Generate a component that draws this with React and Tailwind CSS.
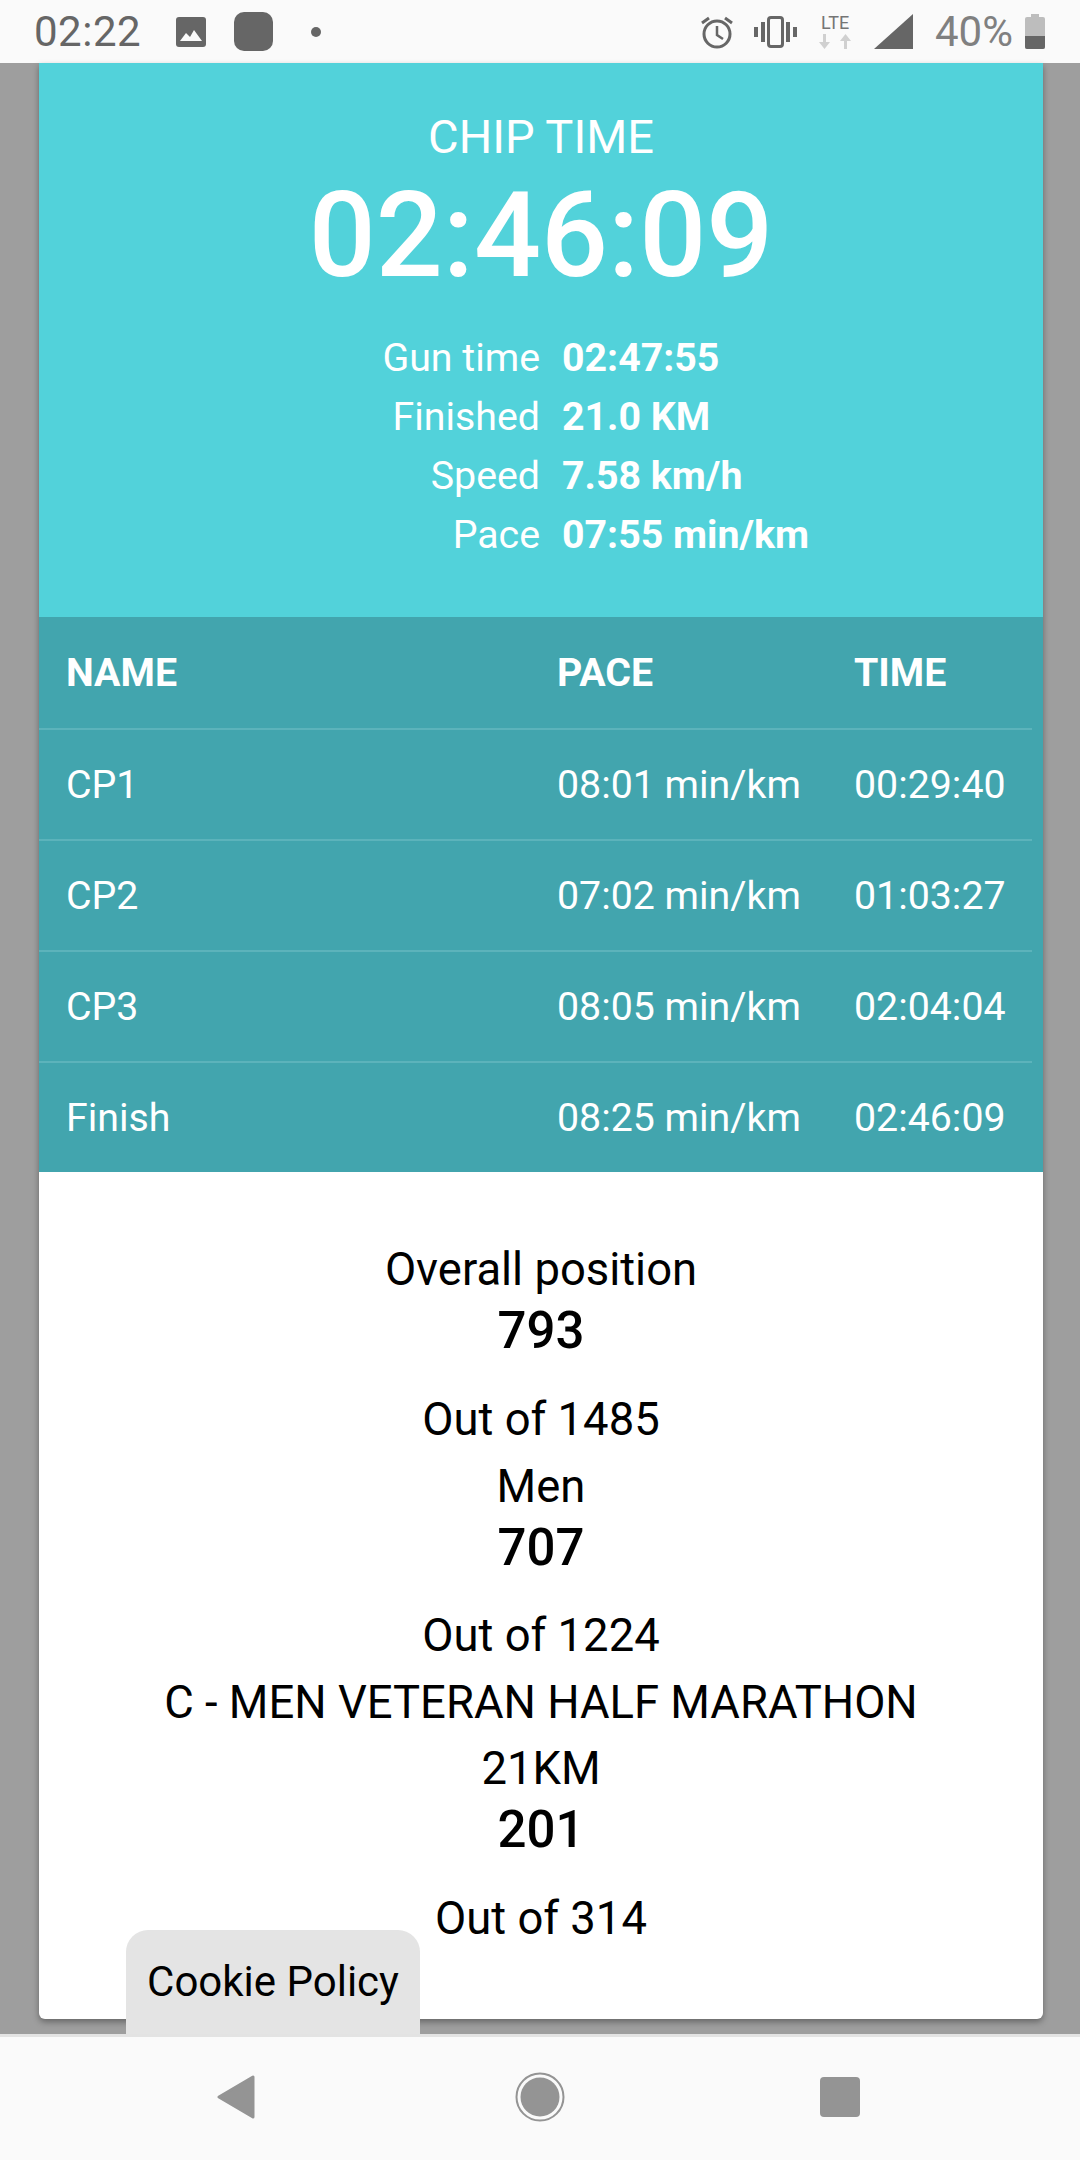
const stats = [
  ['Gun time', '02:47:55'],
  ['Finished', '21.0 KM'],
  ['Speed', '7.58 km/h'],
  ['Pace', '07:55 min/km'],
];

const splits = [
  ['CP1', '08:01 min/km', '00:29:40'],
  ['CP2', '07:02 min/km', '01:03:27'],
  ['CP3', '08:05 min/km', '02:04:04'],
  ['Finish', '08:25 min/km', '02:46:09'],
];

const positions = [
  ['Overall position', '793', 'Out of 1485'],
  ['Men', '707', 'Out of 1224'],
  ['C - MEN VETERAN HALF MARATHON 21KM', '201', 'Out of 314'],
];

function StatusBar() {
  return (
    <div className="h-[63px] shrink-0 bg-[#fafafa] flex items-center text-[#666666]">
      <span className="ml-[34px] w-[142px] text-[42px] leading-none tracking-[0.5px]">02:22</span>
      {/* gallery notification */}
      <svg className="w-[30px] h-[30px]" viewBox="0 0 30 30">
        <rect width="30" height="30" rx="3" fill="#666666" />
        <path d="M4 24l6-8 4 4 4-7 8 11z" fill="#fafafa" />
      </svg>
      <div className="ml-[28px] w-[39px] h-[39px] rounded-[10px] bg-[#666666]" />
      <div className="ml-[38px] w-[10px] h-[10px] rounded-full bg-[#666666]" />
      <div className="flex-1" />
      {/* alarm */}
      <svg className="w-[34px] h-[34px]" viewBox="0 0 34 34" fill="none" stroke="#666666">
        <circle cx="17" cy="19" r="13" strokeWidth="3" />
        <path d="M17 11v9l6 4" strokeWidth="2.5" />
        <path d="M2 8l7-5M32 8l-7-5" strokeWidth="3" />
      </svg>
      {/* vibrate */}
      <svg className="ml-[20px] w-[43px] h-[32px]" viewBox="0 0 43 32" fill="#666666">
        <path d="M0 11h4v10H0zM7 6h4v20H7zM32 6h4v20h-4zM39 11h4v10h-4z" />
        <rect x="14.5" y="1.5" width="14" height="29" rx="2.5" fill="none" stroke="#666666" strokeWidth="3" />
      </svg>
      {/* mobile data */}
      <div className="ml-[21px] w-[34px] flex flex-col items-center">
        <span className="text-[18px] leading-[16px] text-[#757575]">LTE</span>
        <svg className="mt-[3px] w-[34px] h-[15px]" viewBox="0 0 34 15" fill="#d0d0d0">
          <path d="M5 0h3v8h4l-5.5 7L1 8h4zM26 15h3V7h4l-5.5-7L22 7h4z" />
        </svg>
      </div>
      <svg className="ml-[22px] w-[39px] h-[35px]" viewBox="0 0 39 35">
        <path d="M39 0v35H0z" fill="#666666" />
      </svg>
      <span className="ml-[22px] w-[78px] text-[42px] leading-none text-[#808080]">40%</span>
      {/* battery */}
      <svg className="ml-[12px] mr-[35px] w-[20px] h-[35px]" viewBox="0 0 20 35">
        <path d="M6 0h8v3h4a2 2 0 0 1 2 2v28a2 2 0 0 1-2 2H2a2 2 0 0 1-2-2V5a2 2 0 0 1 2-2h4z" fill="#bdbdbd" />
        <path d="M0 22h20v11a2 2 0 0 1-2 2H2a2 2 0 0 1-2-2z" fill="#666666" />
      </svg>
    </div>
  );
}

function NavBar() {
  return (
    <div className="h-[126px] shrink-0 bg-[#fafafa] border-t-[3px] border-[#e3e3e3] relative flex items-center">
      <svg className="ml-[217px] -mt-[3px] w-[38px] h-[44px]" viewBox="0 0 38 44">
        <path d="M36 2v40L2 22z" fill="#949494" stroke="#949494" strokeWidth="3" strokeLinejoin="round" />
      </svg>
      <svg className="ml-[260px] -mt-[3px] w-[50px] h-[50px]" viewBox="0 0 50 50">
        <circle cx="25" cy="25" r="23.5" fill="none" stroke="#949494" strokeWidth="2" />
        <circle cx="25" cy="25" r="19.5" fill="#949494" />
      </svg>
      <div className="ml-[255px] -mt-[3px] w-[40px] h-[40px] rounded-[4px] bg-[#949494]" />
    </div>
  );
}

export default function App() {
  return (
    <div className="relative w-[1080px] h-[2160px] overflow-hidden flex flex-col bg-[#9e9e9e] font-['Roboto',sans-serif] text-black">
      <StatusBar />
      <main className="flex-1 px-[39px]">
        <div className="w-[1004px] h-[1956px] bg-white rounded-b-[6px] overflow-hidden shadow-[0_3px_6px_rgba(0,0,0,0.35)]">
          {/* chip time panel */}
          <section className="h-[554px] bg-[#52d2da] text-white text-center pt-[46px]">
            <p className="text-[47px] leading-[56px]">CHIP TIME</p>
            <p className="text-[118px] leading-[130px] font-medium mt-[6px]">02:46:09</p>
            <div className="mt-[28px] grid grid-cols-[501px_1fr] gap-x-[22px] text-[39.3px] leading-[59px] text-left">
              {stats.map(([label, value]) => (
                <div key={label} className="contents">
                  <span className="text-right">{label}</span>
                  <span className="font-bold">{value}</span>
                </div>
              ))}
            </div>
          </section>

          {/* checkpoint splits */}
          <section className="bg-[#42a5ae] text-white text-[39.3px]">
            <div className="w-[993px] h-[113px] pl-[27px] pt-[2px] grid grid-cols-[491px_297px_1fr] items-center font-bold border-b-2 border-[#5cb3bb]">
              <span>NAME</span>
              <span>PACE</span>
              <span>TIME</span>
            </div>
            {splits.map(([name, pace, time], i) => (
              <div
                key={name}
                className={`w-[993px] pl-[27px] pt-[2px] grid grid-cols-[491px_297px_1fr] items-center ${i < splits.length - 1 ? 'h-[111px] border-b-2 border-[#5cb3bb]' : 'h-[109px]'}`}
              >
                <span>{name}</span>
                <span>{pace}</span>
                <span>{time}</span>
              </div>
            ))}
          </section>

          {/* rankings */}
          <section className="pt-[65px] px-[100px] text-center text-[45.4px] leading-[66px]">
            {positions.map(([label, rank, total]) => (
              <div key={label}>
                <p>{label}</p>
                <p className="text-[51px] leading-[56px] font-medium mb-[27.5px]">{rank}</p>
                <p className="mb-px">{total}</p>
              </div>
            ))}
          </section>
        </div>
      </main>
      <NavBar />
      <button className="absolute left-[126px] top-[1930px] w-[294px] h-[104px] bg-[#e4e4e4] rounded-t-[22px] text-[42px] leading-none text-black pb-[1px]">
        Cookie Policy
      </button>
    </div>
  );
}
